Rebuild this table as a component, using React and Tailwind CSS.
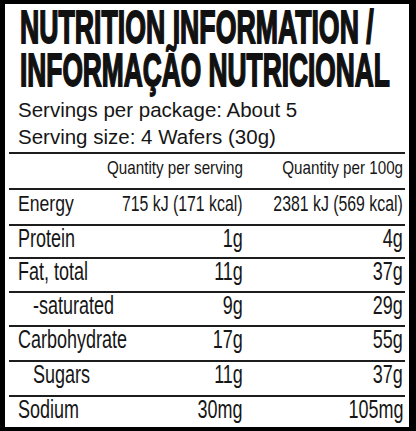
const rows = [
  { label: 'Protein', serving: '1g', per100: '4g', h: 'h-[33px]' },
  { label: 'Fat, total', serving: '11g', per100: '37g', h: 'h-[34px]' },
  { label: '-saturated', serving: '9g', per100: '29g', h: 'h-[34px]', indent: true },
  { label: 'Carbohydrate', serving: '17g', per100: '55g', h: 'h-[35px]' },
  { label: 'Sugars', serving: '11g', per100: '37g', h: 'h-[35px]', indent: true },
  { label: 'Sodium', serving: '30mg', per100: '105mg', h: 'h-[31px]' },
];

// Condensed look: Arial metrics squeezed horizontally
function Squeeze({ children, right, scale = 'scale-x-[0.72]' }) {
  return (
    <span
      className={`inline-block shrink-0 whitespace-nowrap ${scale} ${right ? 'origin-right' : 'origin-left'}`}
    >
      {children}
    </span>
  );
}

const rowGrid = 'grid grid-cols-[96px_138px_minmax(0,1fr)] items-start border-t-2 border-[#1d1d1d]';

export default function App() {
  return (
    <div className="w-[416px] h-[431px] overflow-hidden bg-black font-['Liberation_Sans',Arial,sans-serif]">
      <div className="h-full border-l-[5px] border-t-[4px] border-r-[7px] border-b-[4px] border-black bg-white text-[#161616] flex flex-col overflow-hidden">
        <div className="pl-[15px] pt-[2px] font-bold text-[46px] leading-[43px] text-[#111] [-webkit-text-stroke:1.8px_#111]">
          <div className="whitespace-nowrap origin-left scale-x-[0.58]">NUTRITION INFORMATION /</div>
          <div className="whitespace-nowrap origin-left scale-x-[0.572]">INFORMAÇÃO NUTRICIONAL</div>
        </div>

        <div className="pl-[13px] mt-[4px] text-[20.5px] leading-[27px]">
          <div>Servings per package: About 5</div>
          <div>Serving size: 4 Wafers (30g)</div>
        </div>

        <div className="mx-[4px] mt-[2px]">
          <div className={`${rowGrid} h-[36px] pt-[3px] text-[19px] leading-[22px]`}>
            <div />
            <div className="flex justify-end min-w-0">
              <Squeeze right scale="scale-x-[0.8]">Quantity per serving</Squeeze>
            </div>
            <div className="flex justify-end min-w-0 pr-[2px]">
              <Squeeze right scale="scale-x-[0.8]">Quantity per 100g</Squeeze>
            </div>
          </div>

          <div className={`${rowGrid} h-[36px] pt-[3px] text-[22px] leading-[22px]`}>
            <div className="flex pl-[9px] min-w-0">
              <Squeeze scale="scale-x-[0.8]">Energy</Squeeze>
            </div>
            <div className="flex justify-end min-w-0">
              <Squeeze right>715 kJ (171 kcal)</Squeeze>
            </div>
            <div className="flex justify-end min-w-0 pr-[2px]">
              <Squeeze right>2381 kJ (569 kcal)</Squeeze>
            </div>
          </div>

          {rows.map((r) => (
            <div key={r.label} className={`${rowGrid} ${r.h} text-[25px] leading-[22px] pt-[1px]`}>
              <div className={`flex min-w-0 ${r.indent ? 'pl-[24px]' : 'pl-[9px]'}`}>
                <Squeeze>{r.label}</Squeeze>
              </div>
              <div className="flex justify-end min-w-0">
                <Squeeze right>{r.serving}</Squeeze>
              </div>
              <div className="flex justify-end min-w-0 pr-[2px]">
                <Squeeze right>{r.per100}</Squeeze>
              </div>
            </div>
          ))}
        </div>
      </div>
    </div>
  );
}
